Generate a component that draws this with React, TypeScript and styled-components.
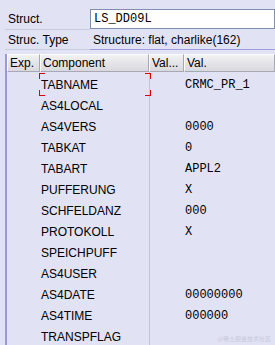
import React from 'react';
import styled, { createGlobalStyle } from 'styled-components';

const GlobalStyle = createGlobalStyle`
  html, body {
    margin: 0;
    padding: 0;
    background: #e2e2f5;
  }
  body {
    font-family: "Liberation Sans", Arial, sans-serif;
    font-size: 12px;
    color: #000;
  }
`;

const Screen = styled.div`
  position: relative;
  width: 275px;
  height: 345px;
  overflow: hidden;
  padding-top: 9px;
  box-sizing: border-box;
  background: #e2e2f5;
`;

const FieldRow = styled.div<{ $tall?: boolean }>`
  display: grid;
  grid-template-columns: 90px 1fr;
  height: ${p => (p.$tall ? 20 : 21)}px;
`;

const Label = styled.div`
  display: flex;
  align-items: center;
  margin-left: 5px;
  padding-left: 3px;
  border-bottom: 1px solid #cbcbe0;
`;

const Input = styled.div`
  height: 20px;
  box-sizing: border-box;
  border: 1px solid #7f8fb0;
  background: #fff;
  padding-left: 3px;
  display: flex;
  align-items: center;
  font-family: "Liberation Mono", "Courier New", monospace;
  font-size: 12px;
`;

const Value = styled.div`
  display: flex;
  align-items: center;
  padding-left: 3px;
  border-bottom: 1px solid #9e9ee0;
`;

const Table = styled.div`
  margin: 4px 0 0 5px;
  border-left: 2px solid #9a9ad6;
  height: 300px;
  position: relative;
`;

const Columns = '33px 109px 35px 1fr';

const HeaderRow = styled.div`
  display: grid;
  grid-template-columns: ${Columns};
  height: 18px;
`;

const HeaderCell = styled.div`
  display: flex;
  align-items: center;
  padding-left: 2px;
  box-sizing: border-box;
  background: linear-gradient(#f2f2f4, #d8d8de);
  border-top: 1px solid #fbfbfb;
  border-left: 1px solid #fbfbfb;
  border-right: 1px solid #a8a8b4;
  border-bottom: 1px solid #a8a8b4;
  white-space: nowrap;
  overflow: hidden;
`;

const Body = styled.div`
  padding-top: 2px;
  display: grid;
  grid-template-columns: ${Columns};
  grid-auto-rows: 21px;
  background: linear-gradient(#c6c6d6, #c6c6d6) no-repeat 142px 0 / 1px 100%;
`;

const Cell = styled.div<{ $mono?: boolean }>`
  position: relative;
  display: flex;
  align-items: center;
  padding-left: 1px;
  white-space: nowrap;
  font-family: ${p =>
    p.$mono ? '"Liberation Mono", "Courier New", monospace' : '"Liberation Sans", Arial, sans-serif'};
`;

const Corner = styled.span<{ $v: 'top' | 'bottom'; $h: 'left' | 'right' }>`
  position: absolute;
  width: 5px;
  height: 5px;
  ${p => p.$v}: -1px;
  ${p => p.$h}: ${p => (p.$h === 'left' ? '-1px' : '-2px')};
  border-${p => p.$v}: 1px solid #e00000;
  border-${p => p.$h}: 1px solid #e00000;
`;

const Watermark = styled.div`
  position: absolute;
  right: 4px;
  bottom: 2px;
  font-family: "Noto Sans CJK SC", sans-serif;
  font-size: 6px;
  color: #c9c9da;
`;

const rows: [string, string][] = [
  ['TABNAME', 'CRMC_PR_1'],
  ['AS4LOCAL', ''],
  ['AS4VERS', '0000'],
  ['TABKAT', '0'],
  ['TABART', 'APPL2'],
  ['PUFFERUNG', 'X'],
  ['SCHFELDANZ', '000'],
  ['PROTOKOLL', 'X'],
  ['SPEICHPUFF', ''],
  ['AS4USER', ''],
  ['AS4DATE', '00000000'],
  ['AS4TIME', '000000'],
  ['TRANSPFLAG', ''],
];

export default function App() {
  return (
    <>
      <GlobalStyle />
      <Screen>
        <FieldRow>
          <Label>Struct.</Label>
          <Input>LS_DD09L</Input>
        </FieldRow>
        <FieldRow $tall>
          <Label>Struc. Type</Label>
          <Value>Structure: flat, charlike(162)</Value>
        </FieldRow>
        <Table>
          <HeaderRow>
            <HeaderCell>Exp.</HeaderCell>
            <HeaderCell>Component</HeaderCell>
            <HeaderCell>Val...</HeaderCell>
            <HeaderCell>Val.</HeaderCell>
          </HeaderRow>
          <Body>
            {rows.map(([name, val], i) => (
              <React.Fragment key={name}>
                <Cell />
                <Cell>
                  {name}
                  {i === 0 && (
                    <>
                      <Corner $v="top" $h="left" />
                      <Corner $v="bottom" $h="left" />
                      <Corner $v="top" $h="right" />
                      <Corner $v="bottom" $h="right" />
                    </>
                  )}
                </Cell>
                <Cell />
                <Cell $mono>{val}</Cell>
              </React.Fragment>
            ))}
          </Body>
        </Table>
        <Watermark>@稀土掘金技术社区</Watermark>
      </Screen>
    </>
  );
}
